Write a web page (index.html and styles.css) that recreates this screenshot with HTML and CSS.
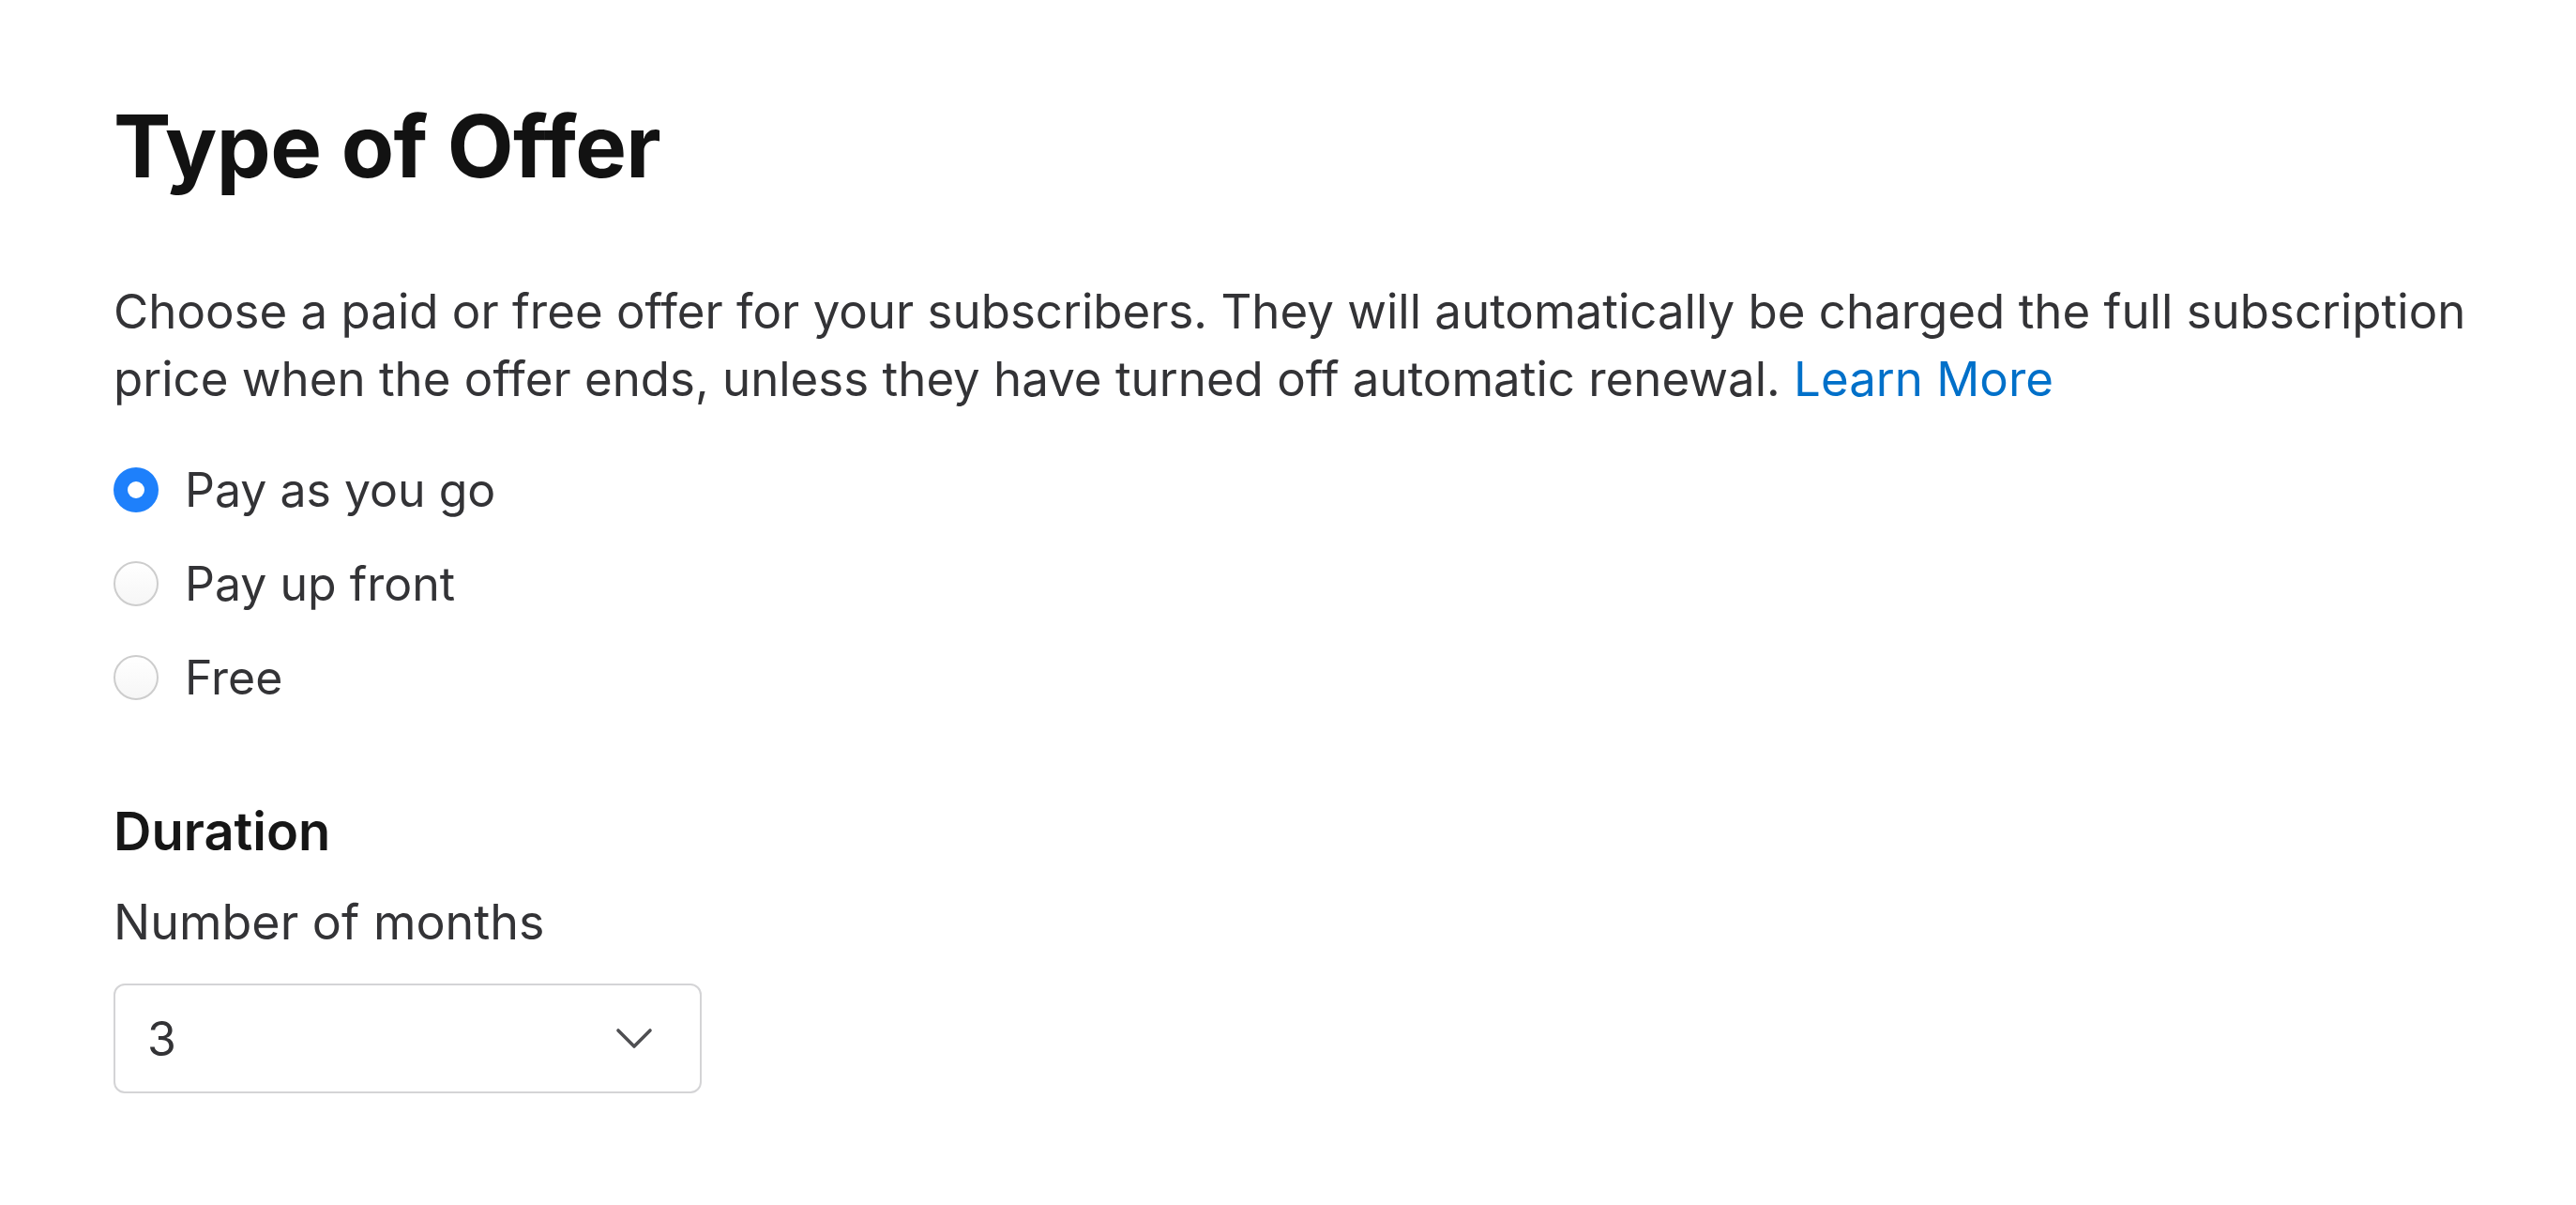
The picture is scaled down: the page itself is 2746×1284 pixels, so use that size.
FILE: index.html
```html
<!DOCTYPE html>
<html lang="en">
<head>
<meta charset="utf-8">
<title>Type of Offer</title>
<link rel="stylesheet" href="styles.css">
</head>
<body>
<main class="page">
  <h1 class="title">Type of Offer</h1>
  <p class="desc"><span class="desc-text">Choose a paid or free offer for your subscribers. They will automatically be charged the full subscription price when the offer ends, unless they have turned off automatic renewal.</span> <a class="link" href="#">Learn More</a></p>
  <ul class="radios">
    <li class="radio-row"><span class="radio is-checked"></span><span class="radio-label">Pay as you go</span></li>
    <li class="radio-row"><span class="radio"></span><span class="radio-label">Pay up front</span></li>
    <li class="radio-row"><span class="radio"></span><span class="radio-label">Free</span></li>
  </ul>
  <h2 class="section-title">Duration</h2>
  <div class="field-label">Number of months</div>
  <div class="select">
    <span class="select-value">3</span>
    <svg class="chevron" width="40" height="24" viewBox="0 0 40 24"><polyline points="3,3 20,20 37,3" fill="none" stroke="#4f4f52" stroke-width="3.6" stroke-linecap="round" stroke-linejoin="round"/></svg>
  </div>
</main>
</body>
</html>
```
FILE: styles.css
```css
html, body {
  margin: 0;
  padding: 0;
  background: #ffffff;
}
body {
  font-family: Inter, "Noto Sans", "Liberation Sans", sans-serif;
  color: #333336;
}
.page {
  padding: 110px 0 0 121px;
}
.title {
  margin: 0;
  font-size: 92px;
  line-height: 92px;
  font-weight: 700;
  color: #121212;
  letter-spacing: -0.6px;
}
.desc {
  margin: 94px 0 0 0;
  font-size: 51px;
  line-height: 72px;
  width: 2580px;
}
.link {
  color: #0070c9;
  text-decoration: none;
}
.radios {
  list-style: none;
  margin: 32px 0 0 0;
  padding: 0;
}
.radio-row {
  display: flex;
  align-items: center;
  height: 100px;
  gap: 28px;
}
.radio {
  box-sizing: border-box;
  flex: none;
  width: 48px;
  height: 48px;
  border-radius: 50%;
  border: 2px solid #cdcdcd;
  background: linear-gradient(#ffffff, #f6f6f6);
  display: flex;
  align-items: center;
  justify-content: center;
}
.radio.is-checked {
  border: none;
  background: #1e80fb;
}
.radio.is-checked::after {
  content: "";
  width: 18px;
  height: 18px;
  border-radius: 50%;
  background: #ffffff;
}
.radio-label {
  font-size: 50px;
  line-height: 60px;
}
.section-title {
  margin: 84px 0 0 0;
  font-size: 56px;
  line-height: 60px;
  font-weight: 600;
  color: #161616;
}
.field-label {
  margin-top: 37px;
  font-size: 52px;
  line-height: 60px;
}
.select {
  box-sizing: border-box;
  margin-top: 35px;
  width: 627px;
  height: 117px;
  border: 2px solid #d4d4d6;
  border-radius: 12px;
  display: flex;
  align-items: center;
  justify-content: space-between;
  padding: 0 50px 0 34px;
}
.select-value {
  font-size: 50px;
  line-height: 60px;
}
```
